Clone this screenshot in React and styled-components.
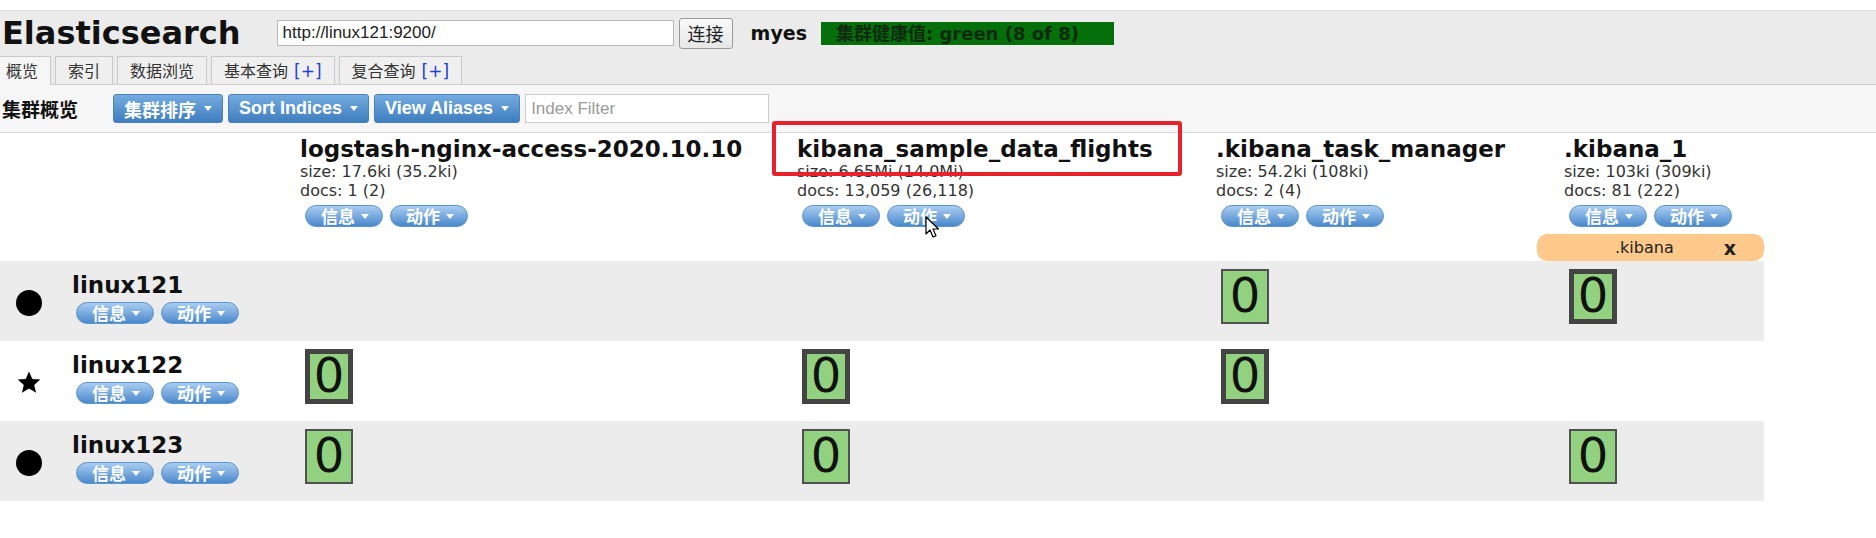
import React from "react";
import styled, { createGlobalStyle, css } from "styled-components";

const GlobalStyle = createGlobalStyle`
  body {
    margin: 0;
    background: #fff;
    color: #111;
    font-family: "DejaVu Sans", "Noto Sans CJK SC", sans-serif;
  }
`;

const COLUMNS = "300px 497px 419px 348px 200px";

const Header = styled.div`
  margin-top: 10px;
  border-top: 1px solid #dcdcdc;
  background: #ebebeb;
`;

const HeaderBar = styled.div`
  display: flex;
  align-items: center;
  height: 44px;
  padding-left: 2px;
`;

const Title = styled.h1`
  margin: 0;
  font: bold 32px "DejaVu Sans", sans-serif;
  color: #111;
`;

const UrlInput = styled.input`
  margin-left: 36px;
  width: 397px;
  height: 26px;
  box-sizing: border-box;
  border: 1px solid #b8b8b8;
  padding: 0 5px;
  background: #fff;
  color: #222;
  font: 17px "Liberation Sans", Arial, sans-serif;
`;

const ConnectButton = styled.button`
  margin-left: 5px;
  width: 54px;
  height: 31px;
  border: 1px solid #9a9a9a;
  border-radius: 3px;
  background: linear-gradient(#fafafa, #e6e6e6);
  color: #222;
  font: 18px "Noto Sans CJK SC", sans-serif;
  padding: 0;
`;

const ClusterName = styled.span`
  margin-left: 18px;
  font: bold 19px "DejaVu Sans", sans-serif;
`;

const Health = styled.span`
  margin-left: 14px;
  width: 293px;
  height: 23px;
  box-sizing: border-box;
  padding-left: 15px;
  background: #05700a;
  color: #102a10;
  font: bold 18px "DejaVu Sans", "Noto Sans CJK SC", sans-serif;
  line-height: 23px;
  white-space: nowrap;
`;

const TabStrip = styled.div`
  display: flex;
  gap: 4px;
  margin-left: -7px;
  height: 29px;
  align-items: flex-end;
  border-bottom: 1px solid #cfcfcf;
`;

const Tab = styled.div`
  height: 28px;
  box-sizing: border-box;
  padding: 0 12px;
  border: 1px solid #c9c9c9;
  border-bottom: none;
  background: #efefef;
  color: #333;
  font: 16px "Noto Sans CJK SC", sans-serif;
  line-height: 27px;
  white-space: nowrap;
  ${p =>
    p.active &&
    css`
      height: 29px;
      margin-bottom: -1px;
      background: #f6f6f6;
    `}
`;

const Plus = styled.span`
  color: #2040d0;
  margin-left: 6px;
  font-family: "DejaVu Sans", sans-serif;
  font-size: 17px;
`;

const Toolbar = styled.div`
  display: flex;
  align-items: center;
  gap: 5px;
  height: 47px;
  padding-left: 2px;
  background: #f6f6f6;
  border-bottom: 1px solid #dadada;
`;

const ToolbarTitle = styled.span`
  margin-right: 30px;
  font: bold 19px "Noto Sans CJK SC", sans-serif;
  color: #111;
`;

const Caret = styled.i`
  display: inline-block;
  flex: none;
  width: 0;
  height: 0;
  border-left: 4.5px solid transparent;
  border-right: 4.5px solid transparent;
  border-top: 5px solid #fff;
`;

const DropButton = styled.button`
  display: flex;
  align-items: center;
  gap: 8px;
  height: 29px;
  padding: 0 10px;
  border: 1px solid #4a82bd;
  border-radius: 3px;
  background: linear-gradient(#74ace0, #3f7dbe);
  color: #fff;
  font: bold 18px "Liberation Sans", "Noto Sans CJK SC", sans-serif;
  white-space: nowrap;
`;

const FilterInput = styled.input`
  width: 244px;
  height: 29px;
  box-sizing: border-box;
  border: 1px solid #cccccc;
  padding: 0 5px;
  background: #fff;
  font: 17px "Liberation Sans", Arial, sans-serif;
  &::placeholder {
    color: #9a9a9a;
  }
`;

const Row = styled.div`
  display: grid;
  grid-template-columns: ${COLUMNS};
  width: 1764px;
`;

const IndexRow = styled(Row)`
  padding-top: 3px;
`;

const IndexCell = styled.div`
  position: relative;
`;

const Name = styled.div`
  font: bold 23px "DejaVu Sans", sans-serif;
  line-height: 26px;
  color: #111;
  white-space: nowrap;
`;

const Meta = styled.div`
  font: 16px "DejaVu Sans", sans-serif;
  line-height: 19px;
  color: #333;
  white-space: nowrap;
`;

const PillGroup = styled.div`
  display: flex;
  gap: 7px;
  margin: ${p => (p.node ? "4px 0 0 4px" : "5px 0 0 5px")};
`;

const Pill = styled.span`
  display: flex;
  align-items: center;
  gap: 6px;
  height: 22px;
  box-sizing: border-box;
  padding: 0 13px 0 15px;
  border: 1px solid #5d95cf;
  border-radius: 11px;
  background: linear-gradient(#a9cdf1, #4a88cb);
  color: #fff;
  font: bold 17px "Noto Sans CJK SC", sans-serif;
  line-height: 20px;
  white-space: nowrap;
`;

const Highlight = styled.div`
  position: absolute;
  left: -25px;
  top: -15px;
  width: 410px;
  height: 55px;
  box-sizing: border-box;
  border: 4px solid #e8222b;
  border-radius: 3px;
  pointer-events: none;
`;

const Cursor = styled.svg`
  position: absolute;
  left: 128px;
  top: 80px;
`;

const AliasRow = styled(Row)`
  height: 27px;
  margin-top: 7px;
`;

const Alias = styled.div`
  grid-column: 5;
  display: flex;
  align-items: center;
  margin-left: -27px;
  height: 27px;
  padding: 0 28px 0 78px;
  border-radius: 10px;
  background: #fec98b;
  font: 16px "DejaVu Sans", sans-serif;
  color: #222;
`;

const AliasClose = styled.b`
  margin-left: auto;
  font: bold 19px "DejaVu Sans", sans-serif;
`;

const NodeRow = styled(Row)`
  height: 80px;
  background: ${p => (p.shaded ? "#ececec" : "#fff")};
`;

const NodeCell = styled.div`
  display: flex;
  align-items: flex-start;
  padding-left: 15px;
`;

const NodeIcon = styled.svg`
  align-self: center;
  margin: 4px 29px 0 0;
  flex: none;
`;

const NodeInfo = styled.div`
  padding-top: 11px;
`;

const Shard = styled.div`
  display: flex;
  align-items: center;
  justify-content: center;
  width: 48px;
  height: 55px;
  box-sizing: border-box;
  margin: 8px 0 0 5px;
  border: ${p => (p.primary ? "5px solid #444" : "2px solid #505050")};
  background: #91d17f;
  color: #111;
  font: 48px "DejaVu Sans", sans-serif;
  line-height: 1;
  padding-bottom: 3px;
`;

const indices = [
  { name: "logstash-nginx-access-2020.10.10", size: "17.6ki (35.2ki)", docs: "1 (2)" },
  { name: "kibana_sample_data_flights", size: "6.65Mi (14.0Mi)", docs: "13,059 (26,118)", marked: true },
  { name: ".kibana_task_manager", size: "54.2ki (108ki)", docs: "2 (4)" },
  { name: ".kibana_1", size: "103ki (309ki)", docs: "81 (222)" },
];

const nodes = [
  { name: "linux121", master: false, shards: [null, null, "r", "p"] },
  { name: "linux122", master: true, shards: ["p", "p", "p", null] },
  { name: "linux123", master: false, shards: ["r", "r", null, "r"] },
];

function Pills({ node }) {
  return (
    <PillGroup node={node}>
      <Pill>信息<Caret /></Pill>
      <Pill>动作<Caret /></Pill>
    </PillGroup>
  );
}

function MasterIcon({ master }) {
  return (
    <NodeIcon width="28" height="28" viewBox="0 0 28 28">
      {master ? (
        <path d="M14 2.5l3.3 7.4 8 .7-6.1 5.3 1.9 7.9L14 19.6l-7.1 4.2 1.9-7.9-6.1-5.3 8-.7z" fill="#000" />
      ) : (
        <circle cx="14" cy="14" r="13" fill="#000" />
      )}
    </NodeIcon>
  );
}

export default function App() {
  return (
    <>
      <GlobalStyle />
      <Header>
        <HeaderBar>
          <Title>Elasticsearch</Title>
          <UrlInput defaultValue="http://linux121:9200/" />
          <ConnectButton>连接</ConnectButton>
          <ClusterName>myes</ClusterName>
          <Health>集群健康值: green (8 of 8)</Health>
        </HeaderBar>
        <TabStrip>
          <Tab active>概览</Tab>
          <Tab>索引</Tab>
          <Tab>数据浏览</Tab>
          <Tab>基本查询<Plus>[+]</Plus></Tab>
          <Tab>复合查询<Plus>[+]</Plus></Tab>
        </TabStrip>
      </Header>
      <Toolbar>
        <ToolbarTitle>集群概览</ToolbarTitle>
        <DropButton>集群排序<Caret /></DropButton>
        <DropButton>Sort Indices<Caret /></DropButton>
        <DropButton>View Aliases<Caret /></DropButton>
        <FilterInput placeholder="Index Filter" />
      </Toolbar>

      <IndexRow>
        <div />
        {indices.map(ix => (
          <IndexCell key={ix.name}>
            <Name>{ix.name}</Name>
            <Meta>size: {ix.size}</Meta>
            <Meta>docs: {ix.docs}</Meta>
            <Pills />
            {ix.marked && (
              <>
                <Highlight />
                <Cursor width="14" height="22" viewBox="0 0 14 22">
                  <path d="M1 1v17l4-4 3 7 3-1.3-3-6.7h5.5z" fill="#fff" stroke="#000" strokeWidth="1.2" strokeLinejoin="round" />
                </Cursor>
              </>
            )}
          </IndexCell>
        ))}
      </IndexRow>
      <AliasRow>
        <Alias>
          .kibana
          <AliasClose>x</AliasClose>
        </Alias>
      </AliasRow>

      {nodes.map((node, i) => (
        <NodeRow key={node.name} shaded={i % 2 === 0}>
          <NodeCell>
            <MasterIcon master={node.master} />
            <NodeInfo>
              <Name>{node.name}</Name>
              <Pills node />
            </NodeInfo>
          </NodeCell>
          {node.shards.map((s, j) => (
            <div key={j}>{s && <Shard primary={s === "p"}>0</Shard>}</div>
          ))}
        </NodeRow>
      ))}
    </>
  );
}
